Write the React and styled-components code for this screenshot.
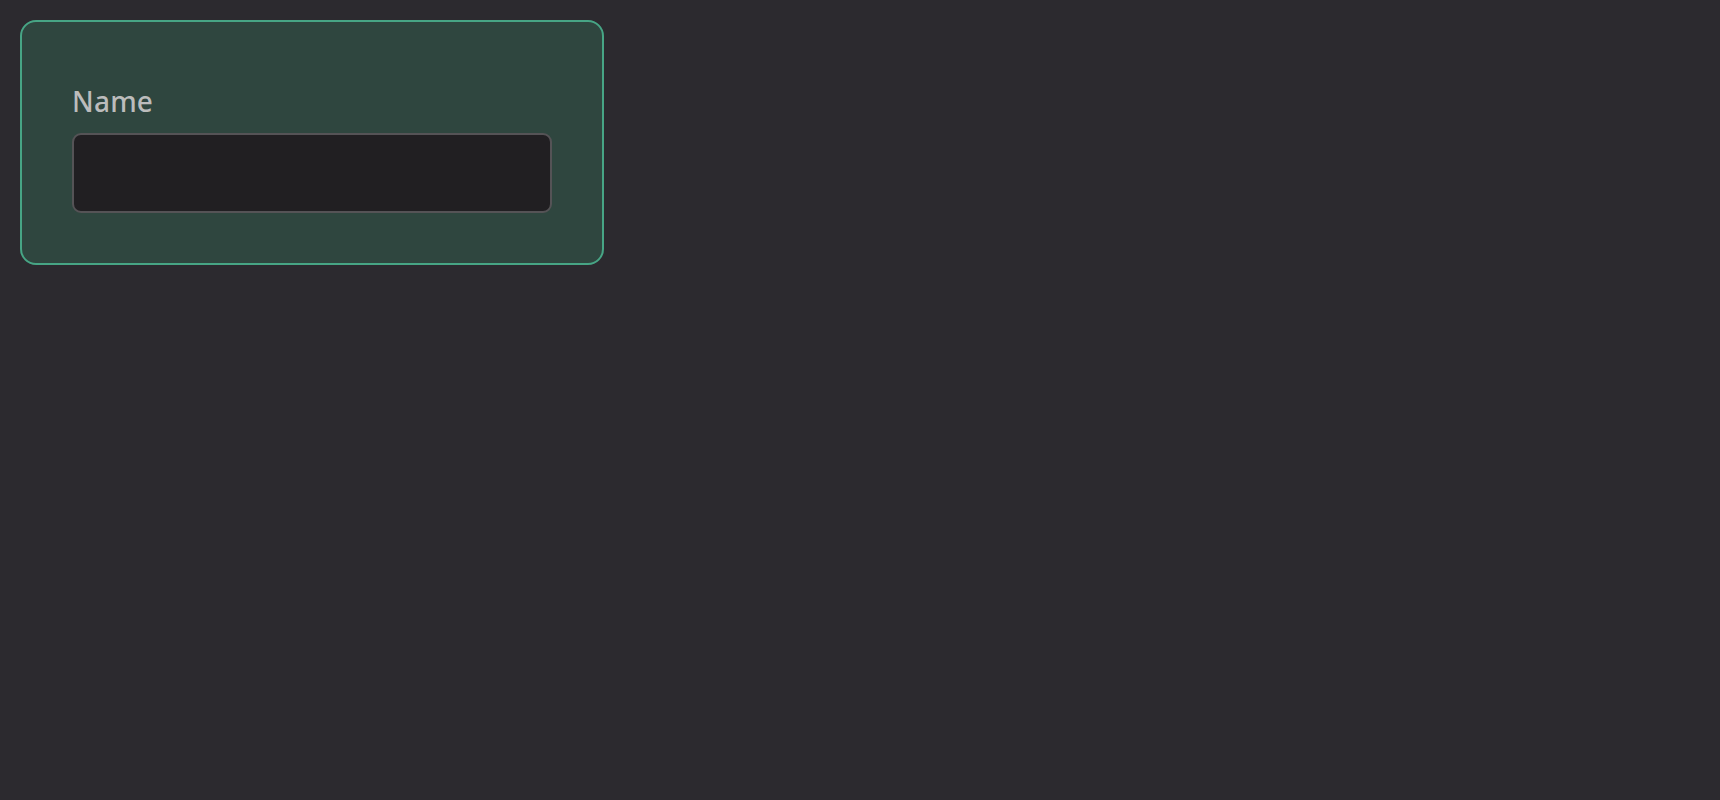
import React, {useState} from 'react';
import styled, {createGlobalStyle} from 'styled-components';

const GlobalStyle = createGlobalStyle`
  html, body {
    margin: 0;
    padding: 0;
    background-color: #2c2a2f;
    font-family: 'Noto Sans', 'Open Sans', sans-serif;
  }
`;

const Page = styled.div`
  min-height: 800px;
  padding: 20px;
  box-sizing: border-box;
  background-color: #2c2a2f;
`;

const Card = styled.form`
  width: 584px;
  box-sizing: border-box;
  padding: 50px;
  background-color: #2f463f;
  border: 2px solid #47a585;
  border-radius: 16px;
`;

const Label = styled.label`
  display: block;
  font-size: 28px;
  font-weight: 500;
  line-height: 58px;
  letter-spacing: 0.2px;
  color: #bcbcbc;
  margin-bottom: 3px;
`;

const Input = styled.input`
  display: block;
  width: 100%;
  height: 80px;
  box-sizing: border-box;
  padding: 0 20px;
  background-color: #211f22;
  border: 2px solid #555356;
  border-radius: 9px;
  outline: none;
  color: #e6e6e6;
  font-family: inherit;
  font-size: 28px;
`;

export default function App() {
    const [name, setName] = useState('');

    return (
        <>
            <GlobalStyle/>
            <Page>
                <Card onSubmit={e => e.preventDefault()}>
                    <Label htmlFor="name">Name</Label>
                    <Input id="name" value={name} onChange={e => setName(e.target.value)}/>
                </Card>
            </Page>
        </>
    );
}
